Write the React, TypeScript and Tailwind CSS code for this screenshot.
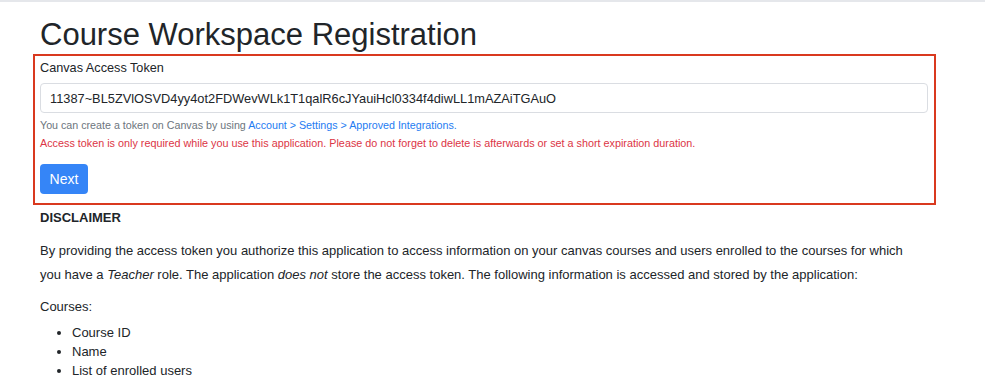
export default function App() {
  const token = "11387~BL5ZVlOSVD4yy4ot2FDWevWLk1T1qalR6cJYauiHcl0334f4diwLL1mAZAiTGAuO";

  return (
    <div className="min-h-screen w-[985px] bg-white border-t-2 border-[#e5e7eb] text-[#212529] font-['Liberation_Sans',Arial,sans-serif]">
      <div className="pl-[40px] pr-[58px] pt-[14px]">
        <h1 className="text-[31px] leading-[38px] font-normal">Course Workspace Registration</h1>
      </div>

      <div className="mx-[33px] w-[903px] border-2 border-[#d9391f] px-[5px] pt-[2px] pb-[9px]">
        <label className="block text-[12.7px] leading-[20px]">Canvas Access Token</label>
        <input
          type="text"
          readOnly
          value={token}
          className="mt-[5px] block w-[888px] h-[30px] px-[9px] text-[12.8px] text-[#212529] border border-[#dadde2] rounded-[4px] outline-none"
        />
        <p className="mt-[4px] text-[10.7px] leading-[16px] text-[#6c757d]">
          You can create a token on Canvas by using{" "}
          <a className="text-[#1e7cf2]">Account &gt; Settings &gt; Approved Integrations.</a>
        </p>
        <p className="mt-[2px] text-[10.8px] leading-[16px] text-[#dc3545]">
          Access token is only required while you use this application. Please do not forget to delete is afterwards or set a short expiration duration.
        </p>
        <button className="mt-[13px] w-[48px] h-[30px] rounded-[4px] bg-[#3585f7] text-white text-[14px]">Next</button>
      </div>

      <div className="pl-[40px] pr-[58px] text-[13px]">
        <p className="mt-[3px] font-bold leading-[20px]">DISCLAIMER</p>
        <p className="mt-[11px] leading-[24px]">
          By providing the access token you authorize this application to access information on your canvas courses and users enrolled to the courses for which you have a <em>Teacher</em> role. The application <em>does not</em> store the access token. The following information is accessed and stored by the application:
        </p>
        <p className="mt-[8px] leading-[24px]">Courses:</p>
        <ul className="mt-[4px] pl-[32px] list-disc leading-[19px]">
          <li>Course ID</li>
          <li>Name</li>
          <li>List of enrolled users</li>
        </ul>
      </div>
    </div>
  );
}
